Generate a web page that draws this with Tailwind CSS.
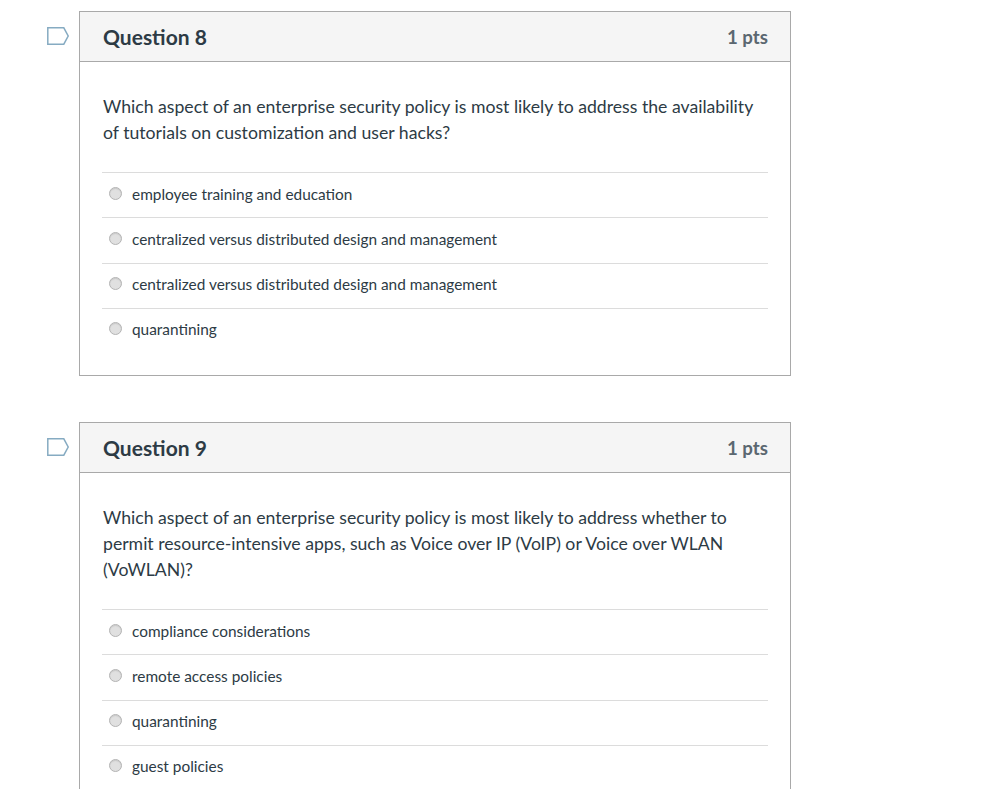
<!DOCTYPE html>
<html>
<head>
<meta charset="utf-8">
<script src="https://cdn.jsdelivr.net/npm/@tailwindcss/browser@4"></script>
</head>
<body class="bg-white font-['Lato',sans-serif] text-[#2d3b45] h-[789px] overflow-hidden">
<div class="pl-[47px] pt-[11px] flex flex-col gap-[46px] w-[791px]">

  <section class="flex items-start">
    <svg class="w-[23px] h-[19px] mt-[16px] mr-[9px] shrink-0" viewBox="0 0 23 19" fill="none"><path d="M0.8 0.8H16.8L21.2 9L16.8 17.2H0.8Z" fill="#fff" stroke="#86abc2" stroke-width="1.5"/></svg>
    <div class="flex-1 border border-[#a9a9a9]">
      <header class="h-[50px] bg-[#f5f5f5] border-b border-[#a9a9a9] flex items-center justify-between pl-[23px] pr-[22px]">
        <h2 class="text-[21px] font-bold mt-[1px]">Question 8</h2>
        <span class="text-[18.7px] font-bold text-[#5b6770] mt-[2px]">1 pts</span>
      </header>
      <div class="px-[22px] pt-[32px] pb-[22px]">
        <p class="text-[17.65px] leading-[26px] mb-[26px] pl-[1px]">Which aspect of an enterprise security policy is most likely to address the availability of tutorials on customization and user hacks?</p>
        <ul class="text-[15.4px]">
          <li class="h-[45px] border-t border-[#dcdcdc] flex items-center pl-[7px] gap-[10px]"><span class="w-[13px] h-[13px] rounded-full bg-[#e0e0e0] border border-[#b4b4b4] shadow-[inset_0_1px_1px_#c8c8c8] mb-[4px]"></span>employee training and education</li>
          <li class="h-[46px] border-t border-[#dcdcdc] flex items-center pl-[7px] pb-[1px] gap-[10px]"><span class="w-[13px] h-[13px] rounded-full bg-[#e0e0e0] border border-[#b4b4b4] shadow-[inset_0_1px_1px_#c8c8c8] mb-[4px]"></span>centralized versus distributed design and management</li>
          <li class="h-[45px] border-t border-[#dcdcdc] flex items-center pl-[7px] pb-[2px] gap-[10px]"><span class="w-[13px] h-[13px] rounded-full bg-[#e0e0e0] border border-[#b4b4b4] shadow-[inset_0_1px_1px_#c8c8c8] mb-[4px]"></span>centralized versus distributed design and management</li>
          <li class="h-[45px] border-t border-[#dcdcdc] flex items-center pl-[7px] pb-[2px] gap-[10px]"><span class="w-[13px] h-[13px] rounded-full bg-[#e0e0e0] border border-[#b4b4b4] shadow-[inset_0_1px_1px_#c8c8c8] mb-[4px]"></span>quarantining</li>
        </ul>
      </div>
    </div>
  </section>

  <section class="flex items-start">
    <svg class="w-[23px] h-[19px] mt-[16px] mr-[9px] shrink-0" viewBox="0 0 23 19" fill="none"><path d="M0.8 0.8H16.8L21.2 9L16.8 17.2H0.8Z" fill="#fff" stroke="#86abc2" stroke-width="1.5"/></svg>
    <div class="flex-1 border border-[#a9a9a9]">
      <header class="h-[50px] bg-[#f5f5f5] border-b border-[#a9a9a9] flex items-center justify-between pl-[23px] pr-[22px]">
        <h2 class="text-[21px] font-bold mt-[1px]">Question 9</h2>
        <span class="text-[18.7px] font-bold text-[#5b6770] mt-[2px]">1 pts</span>
      </header>
      <div class="px-[22px] pt-[32px] pb-[22px]">
        <p class="text-[17.65px] leading-[26px] mb-[26px] pl-[1px]">Which aspect of an enterprise security policy is most likely to address whether to permit resource-intensive apps, such as Voice over IP (VoIP) or Voice over WLAN (VoWLAN)?</p>
        <ul class="text-[15.4px]">
          <li class="h-[45px] border-t border-[#dcdcdc] flex items-center pl-[7px] gap-[10px]"><span class="w-[13px] h-[13px] rounded-full bg-[#e0e0e0] border border-[#b4b4b4] shadow-[inset_0_1px_1px_#c8c8c8] mb-[4px]"></span>compliance considerations</li>
          <li class="h-[46px] border-t border-[#dcdcdc] flex items-center pl-[7px] pb-[1px] gap-[10px]"><span class="w-[13px] h-[13px] rounded-full bg-[#e0e0e0] border border-[#b4b4b4] shadow-[inset_0_1px_1px_#c8c8c8] mb-[4px]"></span>remote access policies</li>
          <li class="h-[45px] border-t border-[#dcdcdc] flex items-center pl-[7px] pb-[2px] gap-[10px]"><span class="w-[13px] h-[13px] rounded-full bg-[#e0e0e0] border border-[#b4b4b4] shadow-[inset_0_1px_1px_#c8c8c8] mb-[4px]"></span>quarantining</li>
          <li class="h-[45px] border-t border-[#dcdcdc] flex items-center pl-[7px] pb-[2px] gap-[10px]"><span class="w-[13px] h-[13px] rounded-full bg-[#e0e0e0] border border-[#b4b4b4] shadow-[inset_0_1px_1px_#c8c8c8] mb-[4px]"></span>guest policies</li>
        </ul>
      </div>
    </div>
  </section>

</div>
</body>
</html>
